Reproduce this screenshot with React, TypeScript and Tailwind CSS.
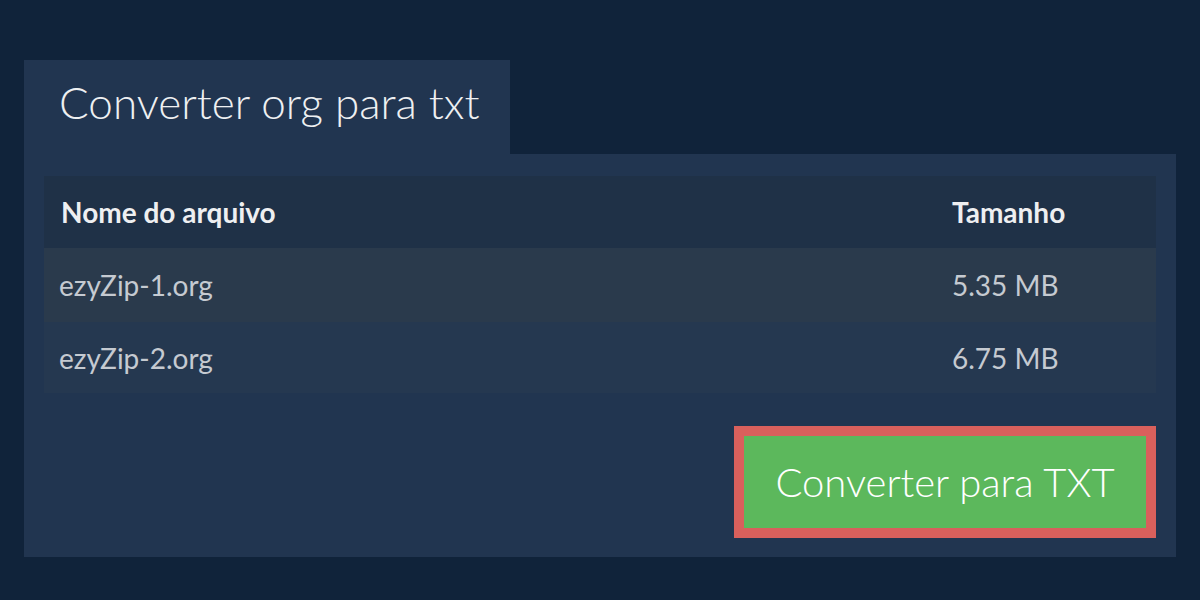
const files = [
  { name: 'ezyZip-1.org', size: '5.35 MB' },
  { name: 'ezyZip-2.org', size: '6.75 MB' },
];

export default function App() {
  return (
    <div className="w-[1200px] h-[600px] bg-[#10233a] px-6 pt-[60px] font-['Lato','Liberation_Sans',sans-serif]">
      {/* Tab header */}
      <div className="w-[486px] h-[94px] bg-[#213550] pl-[35px] flex items-center">
        <h1 className="text-[44px] font-light text-[#eef0f2] leading-none pb-[10px]">Converter org para txt</h1>
      </div>

      {/* Panel */}
      <div className="bg-[#213550] px-5 pt-[22px] pb-[19px]">
        <table className="w-full border-collapse">
          <thead>
            <tr className="h-[72px] bg-[#1f3147]">
              <th className="text-left pl-[17px] text-[28px] font-bold text-[#eeeff1] leading-none">Nome do arquivo</th>
              <th className="text-left w-[204px] text-[28px] font-bold text-[#eeeff1] leading-none">Tamanho</th>
            </tr>
          </thead>
          <tbody>
            {files.map((f, i) => (
              <tr key={f.name} className={i === 0 ? 'h-[74px] bg-[#2a3a4c]' : 'h-[71px] bg-[#253850]'}>
                <td className="pl-[15px] text-[28px] text-[#c5cad1] leading-none">{f.name}</td>
                <td className="text-[28px] text-[#c5cad1] leading-none">{f.size}</td>
              </tr>
            ))}
          </tbody>
        </table>

        <div className="flex justify-end mt-[33px]">
          <button className="w-[422px] h-[112px] border-[10px] border-[#d9605c] bg-[#5cb85c] text-white text-[40px] font-light">
            Converter para TXT
          </button>
        </div>
      </div>
    </div>
  );
}
